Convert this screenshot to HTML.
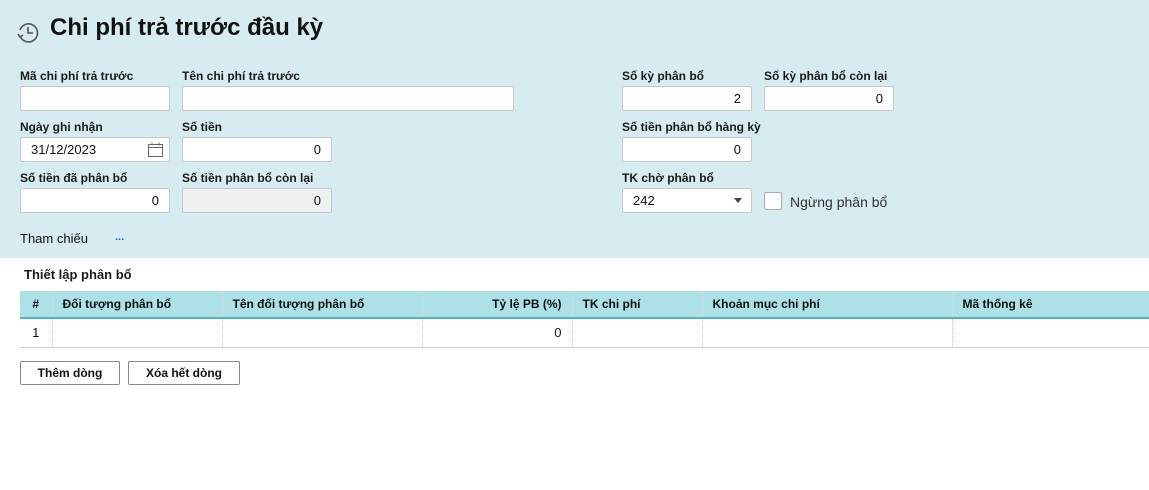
<!DOCTYPE html>
<html><head><meta charset="utf-8"><style>
*{box-sizing:border-box;margin:0;padding:0}
body{width:1149px;height:490px;background:#fff;font-family:"Liberation Sans",Arial,sans-serif;color:#111;position:relative;overflow:hidden}
.top{position:absolute;left:0;top:0;width:1149px;height:258px;background:#d6ecf0}
.a{position:absolute}
.lbl{position:absolute;font-size:12px;font-weight:bold;color:#1a1a1a}
.in{position:absolute;height:25px;background:#fff;border:1px solid #c4c8cc;border-radius:2px;font-size:13px;padding:0 10px;line-height:23px;text-align:right}
h1{position:absolute;left:50px;top:14px;font-size:24px;font-weight:bold;color:#111}
table{position:absolute;left:20px;top:291px;width:1129px;border-collapse:collapse;font-size:12px}
th{background:#ade1e7;height:27px;font-weight:bold;text-align:left;padding:0 10px;border-right:1px solid #c9dfe3;border-bottom:2px solid #4fb3be}
td{height:29px;border-right:1px dotted #bcc;border-bottom:1px solid #ccd;font-size:13px;padding:0 10px}
.btn{position:absolute;top:361px;height:24px;border:1px solid #888;border-radius:2px;background:#fff;font-size:12px;font-weight:bold;text-align:center;line-height:22px}
</style></head><body>
<div class="top"></div>
<svg class="a" style="left:16px;top:21px" width="24" height="24" viewBox="0 0 24 24" fill="none" stroke="#555" stroke-width="1.6"><path d="M4.5 16A9 9 0 1 0 4 9"/><path d="M2 13l2 3 3-2"/><path d="M12 6v6h5"/></svg>
<h1>Chi phí trả trước đầu kỳ</h1>
<div class="lbl" style="left:20px;top:69px">Mã chi phí trả trước</div>
<div class="lbl" style="left:182px;top:69px">Tên chi phí trả trước</div>
<div class="in" style="left:20px;top:86px;width:150px"></div>
<div class="in" style="left:182px;top:86px;width:332px"></div>
<div class="lbl" style="left:20px;top:120px">Ngày ghi nhận</div>
<div class="lbl" style="left:182px;top:120px">Số tiền</div>
<div class="in" style="left:20px;top:137px;width:150px;text-align:left">31/12/2023</div>
<svg class="a" style="left:147px;top:142px" width="17" height="16" viewBox="0 0 17 16" fill="none" stroke="#666"><rect x="1.5" y="2.5" width="14" height="12"/><path d="M1.5 5.5h14M5 0.5v3M12 0.5v3"/></svg>
<div class="in" style="left:182px;top:137px;width:150px">0</div>
<div class="lbl" style="left:20px;top:171px">Số tiền đã phân bổ</div>
<div class="lbl" style="left:182px;top:171px">Số tiền phân bổ còn lại</div>
<div class="in" style="left:20px;top:188px;width:150px">0</div>
<div class="in" style="left:182px;top:188px;width:150px;background:#eff0f1">0</div>
<div class="a" style="left:20px;top:231px;font-size:13px">Tham chiếu</div>
<div class="a" style="left:115px;top:231px;font-size:11px;color:#1a6fc4;font-weight:bold">...</div>
<div class="lbl" style="left:622px;top:69px">Số kỳ phân bổ</div>
<div class="lbl" style="left:764px;top:69px">Số kỳ phân bổ còn lại</div>
<div class="in" style="left:622px;top:86px;width:130px">2</div>
<div class="in" style="left:764px;top:86px;width:130px">0</div>
<div class="lbl" style="left:622px;top:120px">Số tiền phân bổ hàng kỳ</div>
<div class="in" style="left:622px;top:137px;width:130px">0</div>
<div class="lbl" style="left:622px;top:171px">TK chờ phân bổ</div>
<div class="in" style="left:622px;top:188px;width:130px;text-align:left">242</div>
<div class="a" style="left:734px;top:198px;width:0;height:0;border-left:4px solid transparent;border-right:4px solid transparent;border-top:5px solid #444"></div>
<div class="a" style="left:764px;top:192px;width:18px;height:18px;background:#fff;border:1px solid #aaa;border-radius:2px"></div>
<div class="a" style="left:790px;top:194px;font-size:14px;color:#333">Ngừng phân bổ</div>
<div class="lbl" style="left:24px;top:267px;font-size:13px">Thiết lập phân bổ</div>
<table>
<tr><th style="width:32px;text-align:center">#</th><th style="width:170px">Đối tượng phân bổ</th><th style="width:200px">Tên đối tượng phân bổ</th><th style="width:150px;text-align:right">Tỷ lệ PB (%)</th><th style="width:130px">TK chi phí</th><th style="width:250px">Khoản mục chi phí</th><th style="border-right:none">Mã thống kê</th></tr>
<tr><td style="text-align:center">1</td><td></td><td></td><td style="text-align:right">0</td><td></td><td></td><td style="border-right:none"></td></tr>
</table>
<div class="btn" style="left:20px;width:100px">Thêm dòng</div>
<div class="btn" style="left:128px;width:112px">Xóa hết dòng</div>
</body></html>
